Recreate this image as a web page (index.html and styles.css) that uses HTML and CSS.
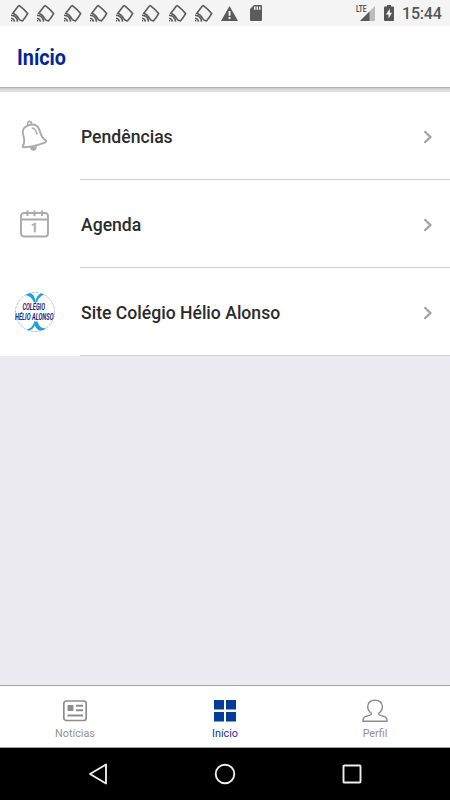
FILE: index.html
```
<!DOCTYPE html>
<html lang="pt-BR">
<head>
  <meta charset="UTF-8">
  <meta name="viewport" content="width=device-width, initial-scale=1.0">
  <title>Início</title>
  <link rel="stylesheet" href="styles.css">
</head>
<body>
  <svg class="defs" width="0" height="0">
    <symbol id="cast" viewBox="0 0 19 19">
      <path d="M2.800 9.300L8.200 2.200Q9 1.200 10 2.100Q14.500 5.500 17.600 9.600Q15.500 13.500 12.400 17Q9.500 16.500 8.800 14.800Q6.800 10.800 2.800 9.300z"/>
      <path d="M1 11.300Q6.700 11.700 7.600 17.700M1 14.200Q3.900 14.500 4.500 17.700"/>
      <path d="M1 16.800h1.200"/>
    </symbol>
    <symbol id="arrow" viewBox="0 0 10 14">
      <path d="M1.500 1.200L7.400 7L1.500 12.800" />
    </symbol>
  </svg>

  <div class="status">
    <div class="notifications">
      <svg class="cast"><use href="#cast"/></svg>
      <svg class="cast"><use href="#cast"/></svg>
      <svg class="cast"><use href="#cast"/></svg>
      <svg class="cast"><use href="#cast"/></svg>
      <svg class="cast"><use href="#cast"/></svg>
      <svg class="cast"><use href="#cast"/></svg>
      <svg class="cast"><use href="#cast"/></svg>
      <svg class="cast"><use href="#cast"/></svg>
    </div>
    <svg class="warning" width="17" height="15" viewBox="0 0 17 15">
      <path fill="#5b5b5b" d="M8.5 0L17 15H0z"/>
      <path fill="#f4f4f4" d="M7.6 5h1.9v4.8H7.6zM7.6 11h1.9v1.9H7.6z"/>
    </svg>
    <svg class="sdcard" width="12" height="16" viewBox="0 0 12 16">
      <path fill="#5b5b5b" d="M4 0h7q1 0 1 1v14q0 1-1 1H1q-1 0-1-1V4z"/>
      <path fill="#f4f4f4" d="M4 1.6h1.5v3.2H4zM6.5 1.6H8v3.2H6.5zM9 1.6h1.5v3.2H9z"/>
    </svg>
    <svg class="signal" width="20" height="17" viewBox="0 0 20 17">
      <path fill="#bcbcbc" d="M19 1v15H4z"/>
      <path fill="#595959" d="M13.5 6.5V16H4z"/>
      <text x="0" y="7.4" textLength="10.5" lengthAdjust="spacingAndGlyphs">LTE</text>
    </svg>
    <svg class="battery" width="10" height="16" viewBox="0 0 10 16">
      <path fill="#555" d="M3 0h4v1.5h2q1 0 1 1V15q0 1-1 1H1q-1 0-1-1V2.5q0-1 1-1h2z"/>
      <path fill="#f4f4f4" d="M5.8 3.5L2 9.5h2.500v4L8 7.800H5.800z"/>
    </svg>
    <span class="time">15:44</span>
  </div>

  <div class="header">
    <h1>Início</h1>
  </div>

  <div class="list">
    <div class="item">
      <div class="icon">
        <svg class="line bell" width="28" height="32" viewBox="0 0 28 32">
          <path fill="#aaa" stroke="none" d="M9 27.3L15.8 26Q15.8 30.7 12.5 30.7T9 27.3z"/>
          <path d="M7.4 5.3C2.5 7 1.300 10 1.900 13.300C2.800 18.500 4.700 21.500 2 25.500Q1 27 2.600 27.300Q13 26.800 24.300 22.300Q26.200 21 24.300 19.800C20 17.700 20 14.500 18.400 9.600C17 5.500 13.200 3.300 7.400 5.300z"/>
          <path stroke-width="1.6" d="M6.7 5.2V3.3Q7 1.3 8.8 1.4Q10.5 1.5 10.7 4.3M10.8 8Q14.8 8.2 16.2 14.5"/>
        </svg>
      </div>
      <div class="content"><span>Pendências</span><svg class="arrow"><use href="#arrow"/></svg></div>
    </div>
    <div class="item">
      <div class="icon">
        <svg class="line" width="29" height="28" viewBox="0 0 29 28">
          <rect x="1" y="3" width="27" height="23.5" rx="3"/>
          <path d="M1 9.5h27M7.5 .5v5.5M14.5 .5v5.5M22 .5v5.5"/>
          <text x="14.5" y="22">1</text>
        </svg>
      </div>
      <div class="content"><span>Agenda</span><svg class="arrow"><use href="#arrow"/></svg></div>
    </div>
    <div class="item">
      <div class="icon">
        <svg class="logo" width="40" height="40" viewBox="0 0 40 40">
          <circle cx="20" cy="20" r="19.5" fill="#fff" stroke="#9aa7d0" stroke-width=".7" stroke-dasharray="3 1"/>
          <path fill="#1b9fe0" d="M10.5 3Q14 .5 16.5 1.5Q20 4 20.5 10H18.5Q17 4.500 10.500 3z"/>
          <path fill="#1b9fe0" d="M20.5 10Q21 3.5 26.5 1.3L29 2.5Q23 5 22.3 10z"/>
          <path fill="#1b9fe0" d="M18.8 29.5H22.5Q23.5 36 31 36.5Q28 39 24.5 38.500Q19.500 36 18.800 29.500z"/>
          <path fill="#1b9fe0" d="M18.8 31Q17 36.5 11.5 37.5L14 38.6Q18.500 37 20 33z"/>
          <text x="7.5" y="18" textLength="22.5" lengthAdjust="spacingAndGlyphs">COLÉGIO</text>
          <text x="0" y="27.8" textLength="38.5" lengthAdjust="spacingAndGlyphs">HÉLIO ALONSO</text>
        </svg>
      </div>
      <div class="content"><span>Site Colégio Hélio Alonso</span><svg class="arrow"><use href="#arrow"/></svg></div>
    </div>
  </div>

  <div class="tabs">
    <div class="tab">
      <svg width="26" height="24" viewBox="0 0 26 24">
        <rect x="1.8" y="2" width="22.4" height="19.5" rx="2.5" fill="none" stroke="#8d8d8d" stroke-width="1.7"/>
        <rect x="5.5" y="6" width="6" height="6" rx="1" fill="#8d8d8d"/>
        <path fill="none" stroke="#8d8d8d" stroke-width="1.9" d="M14 6.7h7M14 11.2h7M5.5 16.5H21"/>
      </svg>
      <span>Notícias</span>
    </div>
    <div class="tab active">
      <svg width="26" height="24" viewBox="0 0 26 24">
        <path fill="#003c98" d="M2 1h10v9.5H2zM14 1h10v9.5h-10zM2 13h10v9.5H2zM14 13h10v9.5h-10z"/>
      </svg>
      <span>Início</span>
    </div>
    <div class="tab">
      <svg width="26" height="24" viewBox="0 0 26 24">
        <path fill="none" stroke="#8d8d8d" stroke-width="1.4" stroke-linejoin="round" d="M1 22.3Q.5 18.5 4.5 17.2Q10.5 15.8 9.3 14.2Q5.7 11.5 5.7 7.5Q6 1.2 13 1.2T20.4 7.5Q20.4 11.5 16.8 14.2Q15.6 15.8 21.5 17.2Q25.5 18.5 25 22.3z"/>
      </svg>
      <span>Perfil</span>
    </div>
  </div>

  <div class="navbar">
    <svg width="20" height="22" viewBox="0 0 20 22"><path d="M18 1.5v19L2 11z"/></svg>
    <svg width="22" height="22" viewBox="0 0 22 22"><circle cx="11" cy="11" r="9.3"/></svg>
    <svg width="20" height="20" viewBox="0 0 20 20"><rect x="1.5" y="1.5" width="17" height="17" rx=".8"/></svg>
  </div>
</body>
</html>
```
FILE: styles.css
```
body{
  margin: 0;
  height: 800px;
  display: flex;
  flex-direction: column;
  overflow: hidden;
  background-color: #ebebf1;
  font-family: Roboto, "Liberation Sans", sans-serif;
}
svg{
  display: block;
  flex: none;
}
svg.defs{
  position: absolute;
}
/* barra de status */
div.status{
  flex: none;
  height: 26px;
  box-sizing: border-box;
  padding: 0 8px 0 10px;
  display: flex;
  align-items: center;
  background-color: #f4f4f4;
}
div.notifications{
  display: flex;
  gap: 7.3px;
}
svg.cast{
  width: 19px;
  height: 19px;
  fill: none;
  stroke: #5b5b5b;
  stroke-width: 1.6;
}
svg.warning{
  margin-left: 7.5px;
}
svg.sdcard{
  margin-left: 12px;
}
svg.signal{
  margin-left: auto;
}
svg.signal text{
  font-size: 8.5px;
  font-weight: bold;
  fill: #555;
}
svg.battery{
  margin-left: 8px;
}
span.time{
  width: 40px;
  margin: 2px 0 0 8px;
  font-size: 16px;
  font-weight: 500;
  line-height: 20px;
  letter-spacing: -.2px;
  color: #555;
}
/* cabeçalho */
div.header{
  flex: none;
  height: 61px;
  padding-left: 17px;
  display: flex;
  align-items: center;
  background-color: #fff;
}
div.header h1{
  margin: 1px 0 0;
  font-size: 22.5px;
  line-height: 26px;
  color: #012698;
  transform: scaleX(.88);
  transform-origin: left;
}
/* sombra do cabeçalho */
div.header + div.list{
  border-top: 5px solid #dcdce1;
  border-image: linear-gradient(#a9a9ad 0, #b8b8bd 1px, #d9d9de 2px, #e0e0e7 5px) 5 0 0 0;
}
/* lista */
div.list{
  background-color: #fff;
}
div.item{
  height: 88px;
  display: flex;
}
div.icon{
  width: 80px;
  box-sizing: border-box;
  padding-right: 11px;
  display: flex;
  align-items: center;
  justify-content: center;
}
svg.line{
  fill: none;
  stroke: #aaa;
  stroke-width: 1.9;
}
svg.line text{
  fill: #aaa;
  stroke: #aaa;
  stroke-width: .4;
  font-size: 12px;
  font-weight: 500;
  text-anchor: middle;
}
svg.logo{
  overflow: visible;
}
svg.logo text{
  fill: #142d83;
  font-size: 9.4px;
  font-weight: bold;
  font-style: italic;
}
div.content{
  flex: 1;
  padding: 2px 17px 0 1px;
  display: flex;
  align-items: center;
  justify-content: space-between;
  border-bottom: 1px solid #cfcfd1;
  font-size: 17.6px;
  font-weight: 500;
  color: #2b2b2b;
}
svg.arrow{
  width: 10px;
  height: 14px;
  fill: none;
  stroke: #a3a3a3;
  stroke-width: 2.3;
}
/* abas */
div.tabs{
  flex: none;
  height: 61px;
  margin-top: auto;
  display: flex;
  border-top: 1px solid #a3a3ad;
  border-bottom: 1px solid #a3a3a8;
  background-color: #fff;
}
div.tab{
  flex: 1;
  padding-top: 13px;
  display: flex;
  flex-direction: column;
  align-items: center;
  gap: 4px;
  font-size: 10.8px;
  line-height: 14px;
  color: #929292;
}
div.active{
  color: #1c2fa0;
}
/* botões do sistema */
div.navbar{
  flex: none;
  height: 52px;
  padding-right: 1px;
  box-sizing: border-box;
  display: flex;
  align-items: center;
  justify-content: center;
  gap: 106px;
  background-color: #000;
}
div.navbar svg{
  fill: none;
  stroke: #eee;
  stroke-width: 1.9;
  stroke-linejoin: round;
}
```
